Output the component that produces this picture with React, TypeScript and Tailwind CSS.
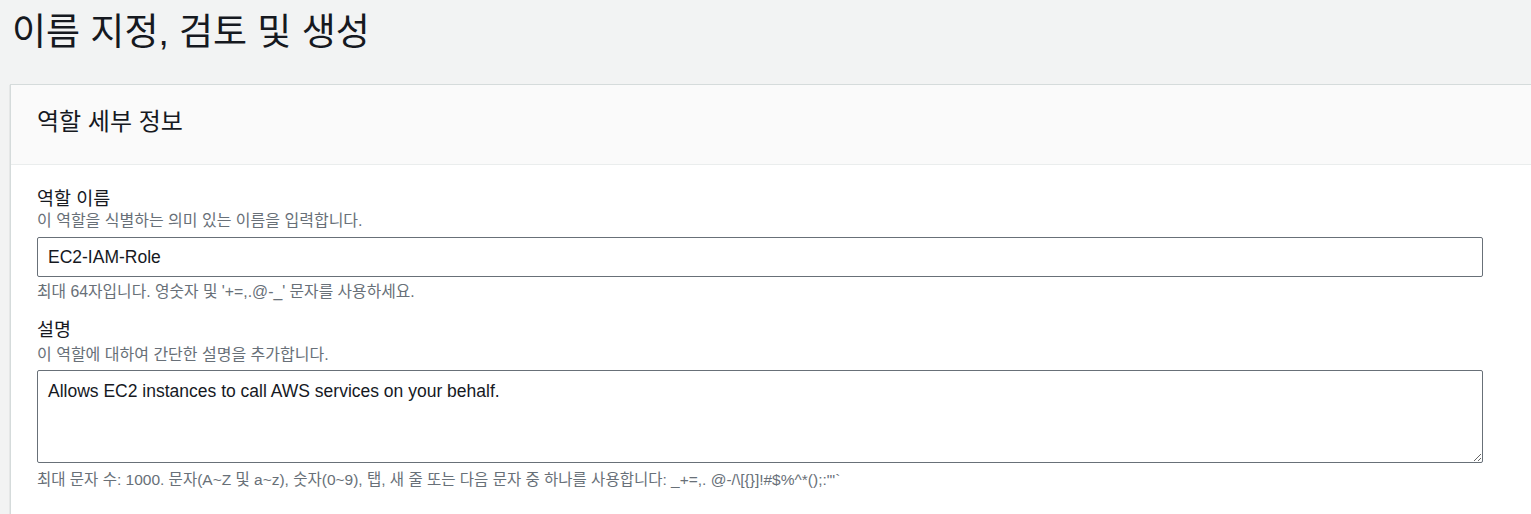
import React from "react";

const KR = { fontFamily: '"Liberation Sans", "Noto Sans CJK KR", Arial, sans-serif' };

export default function App() {
  return (
    <div className="w-[1531px] h-[514px] overflow-hidden bg-[#f2f3f3] text-[#16191f]" style={KR}>
      <div className="h-[84px] pl-[12px] pt-[10px]">
        <h1 className="text-[37px] leading-[46px] font-normal">이름 지정, 검토 및 생성</h1>
      </div>
      <div className="ml-[10px] w-[1540px] bg-white border-l border-t border-[#d5dbdb] shadow-[0_1px_1px_0_rgba(0,28,36,0.3)] h-[440px]">
        <div className="h-[80px] bg-[#fafafa] border-b border-[#eaeded] flex items-center pl-[26px] pb-[6px]">
          <h2 className="text-[24px] leading-[30px] font-normal">역할 세부 정보</h2>
        </div>
        <div className="pl-[26px] pr-[67px] pt-[22px]">
          <div className="text-[18.5px] leading-[24px]">역할 이름</div>
          <div className="text-[16px] leading-[20px] text-[#687078]">이 역할을 식별하는 의미 있는 이름을 입력합니다.</div>
          <input
            readOnly
            value="EC2-IAM-Role"
            className="mt-[6px] block w-full h-[40px] border border-[#687078] rounded-[2px] px-[10px] text-[17.5px] text-[#16191f] bg-white outline-none"
            style={KR}
          />
          <div className="text-[15.8px] leading-[20px] mt-[5px] text-[#687078]">최대 64자입니다. 영숫자 및 '+=,.@-_' 문자를 사용하세요.</div>
          <div className="text-[18.5px] leading-[24px] mt-[16px]">설명</div>
          <div className="text-[16px] leading-[20px] mt-[3px] text-[#687078]">이 역할에 대하여 간단한 설명을 추가합니다.</div>
          <textarea
            readOnly
            value="Allows EC2 instances to call AWS services on your behalf."
            className="mt-[5px] block w-full h-[93px] border border-[#687078] rounded-[2px] px-[10px] pt-[8px] text-[17.5px] leading-[24px] text-[#16191f] bg-white outline-none resize-y"
            style={KR}
          />
          <div className="text-[15.5px] leading-[20px] mt-[7px] text-[#687078]">최대 문자 수: 1000. 문자(A~Z 및 a~z), 숫자(0~9), 탭, 새 줄 또는 다음 문자 중 하나를 사용합니다: _+=,. @-/\[{"{"}{"}"}]!#$%^*();:"'`</div>
        </div>
      </div>
    </div>
  );
}
